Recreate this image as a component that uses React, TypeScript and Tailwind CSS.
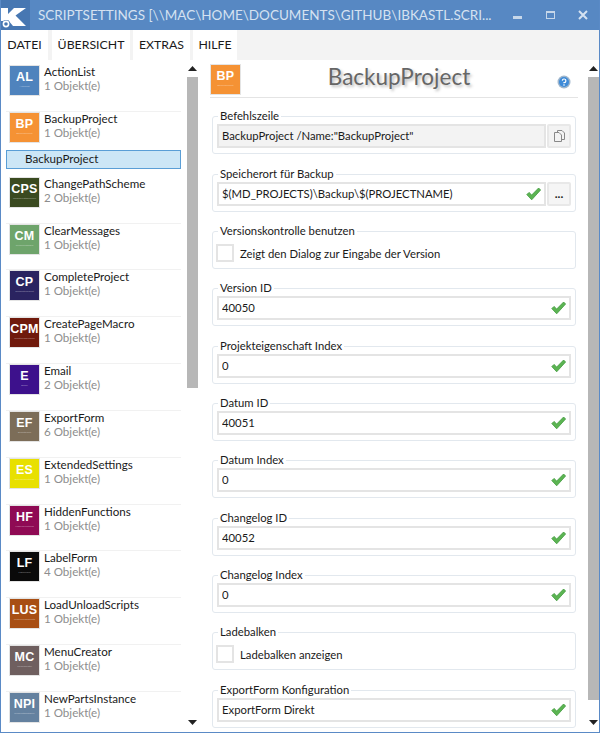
import React from "react";

const items: [string, string, string, string, string][] = [
  ["AL", "Actionlist", "ActionList", "1", "bg-[#4f83bd]"],
  ["BP", "BackupProject", "BackupProject", "1", "bg-[#f59234]"],
  ["CPS", "ChangePathScheme", "ChangePathScheme", "2", "bg-[#3a4a20]"],
  ["CM", "ClearMessages", "ClearMessages", "1", "bg-[#6ea46b]"],
  ["CP", "CompleteProject", "CompleteProject", "1", "bg-[#2a2360]"],
  ["CPM", "CreatePageMacro", "CreatePageMacro", "1", "bg-[#701a0c]"],
  ["E", "Email", "Email", "2", "bg-[#3d118c]"],
  ["EF", "ExportForm", "ExportForm", "6", "bg-[#7c6d58]"],
  ["ES", "ExtendedSettings", "ExtendedSettings", "1", "bg-[#e8e000]"],
  ["HF", "HiddenFunctions", "HiddenFunctions", "1", "bg-[#8f0a54]"],
  ["LF", "LabelForm", "LabelForm", "4", "bg-[#0a0a0a]"],
  ["LUS", "LoadUnloadScripts", "LoadUnloadScripts", "1", "bg-[#a84f14]"],
  ["MC", "MenuCreator", "MenuCreator", "1", "bg-[#6f5f5f]"],
  ["NPI", "NewPartsInstance", "NewPartsInstance", "1", "bg-[#64819f]"],
];

function Tile({ short, name, color }: { short: string; name: string; color: string }) {
  return (
    <div className={`w-[31px] h-[31px] shrink-0 flex flex-col items-center overflow-hidden text-white border border-[#e4e4e4] ${color}`}>
      <span className="mt-[4px] text-[12.5px] leading-[15px] font-bold tracking-[0.2px] font-['Liberation_Sans',sans-serif]">{short}</span>
      <span className="text-[2.5px] leading-[4px] opacity-50 whitespace-nowrap font-['Liberation_Sans',sans-serif]">{name}</span>
    </div>
  );
}

function Check() {
  return (
    <svg width="15" height="14" viewBox="0 0 15 14" className="shrink-0">
      <path d="M0.8 7.6 L3 5.4 L5.7 8 L12.6 1 L14.6 3 L5.7 12.8 Z" fill="#5cb452" stroke="#3f9a3c" strokeWidth="0.8" strokeLinejoin="round" />
    </svg>
  );
}

function Scrollbar({ thumb }: { thumb: string }) {
  return (
    <div className="w-[11px] shrink-0 flex flex-col items-center">
      <svg width="9" height="5" viewBox="0 0 9 5" className="mt-[6px] mb-[6px] shrink-0"><path d="M4.5 0 L9 5 H0 Z" fill="#222" /></svg>
      <div className={`w-full bg-[#b7b7b7] ${thumb}`} />
      <div className="flex-1" />
      <svg width="9" height="5" viewBox="0 0 9 5" className="mb-[7px] shrink-0"><path d="M0 0 H9 L4.5 5 Z" fill="#222" /></svg>
    </div>
  );
}

function Group({ label, children }: { label: string; children: React.ReactNode }) {
  return (
    <div className="mt-[19.33px] border border-[#e2e8ee] rounded-[3px] h-[38px] px-[4px]">
      <div className="relative -top-[9px] -mb-[9px] ml-[1px] w-fit bg-white px-[2px] h-[16px] text-[11.3px] leading-[16px] text-[#1a1a1a]">{label}</div>
      {children}
    </div>
  );
}

function TextField({ label, value }: { label: string; value: string }) {
  return (
    <Group label={label}>
      <div className="h-[24px] -mt-[1px] border-2 border-[#e4e4e4] bg-white flex items-center pl-[3px] pr-[3px] text-[11.3px] text-[#1a1a1a]">
        <span className="flex-1 truncate pt-px">{value}</span>
        <Check />
      </div>
    </Group>
  );
}

function CheckField({ label, text }: { label: string; text: string }) {
  return (
    <Group label={label}>
      <div className="flex items-center gap-[6px] mt-[4px] -ml-px text-[11.3px] text-[#1a1a1a]">
        <div className="w-[18px] h-[18px] border-2 border-[#e4e4e4] bg-white shrink-0" />
        <span className="pt-[3px]">{text}</span>
      </div>
    </Group>
  );
}

export default function App() {
  return (
    <div className="w-[600px] h-[733px] overflow-hidden flex flex-col bg-white border-x border-b border-[#5a8ac6] font-['Lato',sans-serif]">
      <div className="h-[30px] -mx-px shrink-0 bg-[#5788c3] flex items-center text-[#d5e2f1]">
        <svg width="30" height="30" viewBox="0 0 30 30" className="shrink-0">
          <rect x="0" y="0" width="30" height="30" fill="#4777b2" />
          <path d="M1 8 H8 V14 L14 8 H26 L15.5 15.5 L26 26 H13 L8 20 V21 H1 Z" fill="#fff" />
          <circle cx="6" cy="24" r="4" fill="#4777b2" />
          <circle cx="6" cy="24" r="2.6" fill="none" stroke="#fff" strokeWidth="1.6" />
        </svg>
        <div className="ml-[8px] flex-1 min-w-0 text-[13.5px] whitespace-nowrap">SCRIPTSETTINGS [\\MAC\HOME\DOCUMENTS\GITHUB\IBKASTL.SCRI...</div>
        <div className="w-[112px] flex items-center shrink-0 pl-[25px]">
          <div className="w-[9px] h-[3px] bg-[#c6d7ea] mt-[4px]" />
          <div className="ml-[24px] w-[9px] h-[8px] border border-t-2 border-[#c6d7ea] -mt-[1px]" />
          <svg width="10" height="10" viewBox="0 0 10 10" className="ml-[23px]"><path d="M1 1 L9 9 M9 1 L1 9" stroke="#d5e2f1" strokeWidth="2" /></svg>
        </div>
      </div>

      <div className="h-[30px] shrink-0 bg-[#f3f3f3] flex items-stretch text-[12.3px] text-[#1a1a1a]">
        {[
          ["DATEI", "w-[47px] mr-[4px]"],
          ["ÜBERSICHT", "w-[78px] mr-[3px]"],
          ["EXTRAS", "w-[57px] mr-[3px]"],
          ["HILFE", "w-[44px]"],
        ].map(([m, w]) => (
          <div key={m} className={`bg-white flex items-center justify-center ${w}`}>{m}</div>
        ))}
      </div>

      <div className="flex-1 min-h-0 flex">
        <div className="w-[197px] shrink-0 flex">
          <div className="flex-1 min-w-0 overflow-hidden pt-[5px] pl-[5px] pr-[6px]">
            {items.map(([short, name, title, n, color]) => (
              <div key={short}>
                <div className="h-[46.82px] border-b border-[#f1f1f1] flex pl-[3px]">
                  <Tile short={short} name={name} color={color} />
                  <div className="ml-[4px] -mt-px">
                    <div className="text-[11.6px] leading-[15px] text-[#1a1a1a]">{title}</div>
                    <div className="text-[11.6px] leading-[14px] text-[#8d8d8d]">{n} Objekt(e)</div>
                  </div>
                </div>
                {short === "BP" && (
                  <div className="h-[19px] -mt-[9px] mb-[8.2px] border border-[#5a9ed6] bg-[#cce6f6] pl-[18px] text-[11.6px] leading-[15px] text-[#1a1a1a] relative">BackupProject</div>
                )}
              </div>
            ))}
          </div>
          <Scrollbar thumb="h-[311px]" />
        </div>

        <div className="flex-1 min-w-0 flex pl-[14px]">
          <div className="flex-1 min-w-0 pt-[4px]">
            <div className="h-[34px] -ml-[2px] mr-[10px] border-b border-[#e4e4e4] flex items-start">
              <Tile short="BP" name="BackupProject" color="bg-[#f59234]" />
              <div className="flex-1 text-center text-[22.5px] leading-[26px] text-[#666] [text-shadow:2px_2px_3px_#bbb]">BackupProject</div>
              <svg width="14" height="14" viewBox="0 0 14 14" className="mt-[11px] mr-[7px] shrink-0">
                <circle cx="7" cy="7" r="6.5" fill="#9fb6cc" />
                <circle cx="7" cy="7" r="5" fill="#3f8bd8" />
                <path d="M5.3 5.6 A1.8 1.8 0 1 1 7 7.6 V8.3" fill="none" stroke="#fff" strokeWidth="1.2" />
                <circle cx="7" cy="10" r="0.8" fill="#fff" />
              </svg>
            </div>

            <div className="mr-[12px] -mt-px">
              <Group label="Befehlszeile">
                <div className="flex h-[24px] -mt-[1px]">
                  <div className="flex-1 border-2 border-[#e4e4e4] bg-[#f3f3f3] flex items-center pl-[3px] text-[11.3px] text-[#1a1a1a]">BackupProject /Name:"BackupProject"</div>
                  <div className="w-[24px] ml-px border-2 border-[#e8e8e8] rounded-[2px] bg-[#f3f3f3] flex items-center justify-center">
                    <svg width="11" height="12" viewBox="0 0 11 12"><path d="M3.5 2.5 V0.5 H8 L10.5 3 V9.5 H7.5 M0.5 2.5 H5 L7.5 5 V11.5 H0.5 Z" fill="#f3f3f3" stroke="#888" /></svg>
                  </div>
                </div>
              </Group>
              <Group label="Speicherort für Backup">
                <div className="flex h-[24px] -mt-[1px]">
                  <div className="flex-1 border-2 border-[#e4e4e4] flex items-center pl-[3px] pr-[3px] text-[11.3px] text-[#1a1a1a]">
                    <span className="flex-1 pt-px">$(MD_PROJECTS)\Backup\$(PROJECTNAME)</span>
                    <Check />
                  </div>
                  <div className="w-[24px] ml-px border-2 border-[#e8e8e8] rounded-[2px] bg-[#f5f5f5] flex items-center justify-center text-[12px] leading-[12px] font-bold text-[#222]">...</div>
                </div>
              </Group>
              <CheckField label="Versionskontrolle benutzen" text="Zeigt den Dialog zur Eingabe der Version" />
              <TextField label="Version ID" value="40050" />
              <TextField label="Projekteigenschaft Index" value="0" />
              <TextField label="Datum ID" value="40051" />
              <TextField label="Datum Index" value="0" />
              <TextField label="Changelog ID" value="40052" />
              <TextField label="Changelog Index" value="0" />
              <CheckField label="Ladebalken" text="Ladebalken anzeigen" />
              <TextField label="ExportForm Konfiguration" value="ExportForm Direkt" />
            </div>
          </div>
          <Scrollbar thumb="h-[623px]" />
        </div>
      </div>
    </div>
  );
}
